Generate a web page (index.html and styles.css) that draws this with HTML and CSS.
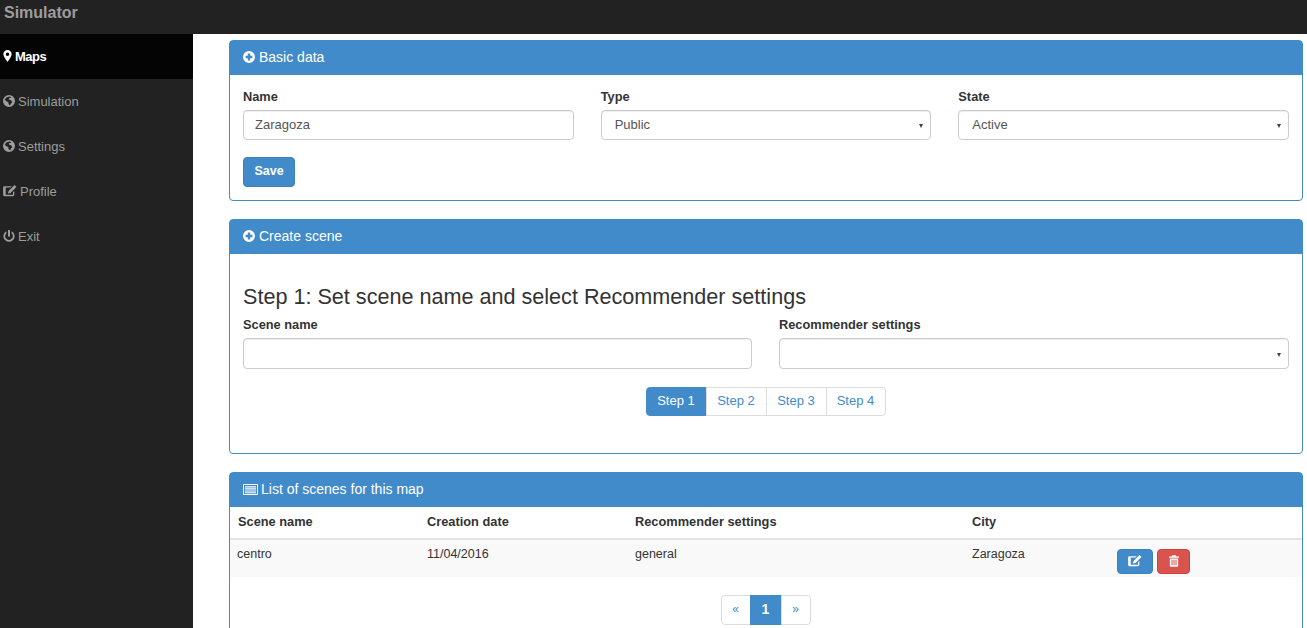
FILE: index.html
```html
<!DOCTYPE html>
<html lang="en">
<head>
  <meta charset="UTF-8" />
  <title>Simulator</title>
  <link rel="stylesheet" href="styles.css">
</head>
<body>
  <svg class="icon-defs" aria-hidden="true">
    <symbol id="i-marker" viewBox="0 0 10 14"><path fill-rule="evenodd" d="M5 0a4.800 4.800 0 0 1 4.800 4.900C9.800 7.600 7 11 5 14 3 11 .2 7.600 .2 4.900A4.800 4.800 0 0 1 5 0zm0 2.800a2.100 2.100 0 1 0 0 4.200 2.100 2.100 0 0 0 0-4.200z"/></symbol>
    <symbol id="i-globe" viewBox="0 0 12 12"><path fill-rule="evenodd" d="M6 0a6 6 0 1 1 0 12A6 6 0 0 1 6 0zM3.200 2.400 1.800 4.800 3.800 6.600 5.200 6.900 5.600 9 7 10.400 8 8.600 9.400 7.200 8 5.300 6.200 4.800 5.700 3.600 7 3 8.400 2.500 6.600 1.500z"/></symbol>
    <symbol id="i-edit" viewBox="0 0 16 14"><path d="M1.500 1.500H10L8.600 3H3v8.500h8.500V8.400L13 7v4.500a1.500 1.500 0 0 1-1.500 1.500h-10A1.500 1.500 0 0 1 0 11.500V3a1.500 1.500 0 0 1 1.500-1.500z"/><path d="M13.300 0 15.500 2.200 8.600 9.200 5.500 10 6.300 6.900z"/></symbol>
    <symbol id="i-power" viewBox="0 0 12 12"><path d="M5 0h2v6.500H5z"/><path d="M3.400 1.300v2.200a3.700 3.700 0 1 0 5.200 0V1.300a5.600 5.600 0 1 1-5.200 0z"/></symbol>
    <symbol id="i-plus" viewBox="0 0 12 12"><path fill-rule="evenodd" d="M6 0a6 6 0 1 1 0 12A6 6 0 0 1 6 0zM4.800 2.600v2.200H2.600v2.400h2.200v2.200h2.400V7.200h2.200V4.800H7.200V2.600z"/></symbol>
    <symbol id="i-list" viewBox="0 0 15 11"><path fill-rule="evenodd" d="M1 0h13a1 1 0 0 1 1 1v9a1 1 0 0 1-1 1H1a1 1 0 0 1-1-1V1a1 1 0 0 1 1-1zM1 1v9h13V1z"/><path d="M2 2.200h11v1.200H2zM2 4.300h11v1.200H2zM2 6.400h11v1.200H2zM2 8.300h11v1H2z"/></symbol>
    <symbol id="i-trash" viewBox="0 0 12 14"><path fill-rule="evenodd" d="M4 0h4l1 1.500h3V3H0V1.500h3zM1 4h10v8.500a1.500 1.500 0 0 1-1.500 1.500h-7A1.500 1.500 0 0 1 1 12.500zM3 5.500V12h1.200V5.500zM5.400 5.500V12h1.200V5.500zM7.800 5.500V12H9V5.500z"/></symbol>
  </svg>

  <header class="topbar">Simulator</header>

  <div class="layout">
    <nav class="sidebar">
      <a class="nav-item active"><svg class="icon icon-marker"><use href="#i-marker"/></svg>Maps</a>
      <a class="nav-item"><svg class="icon"><use href="#i-globe"/></svg>Simulation</a>
      <a class="nav-item"><svg class="icon"><use href="#i-globe"/></svg>Settings</a>
      <a class="nav-item"><svg class="icon icon-wide"><use href="#i-edit"/></svg>Profile</a>
      <a class="nav-item"><svg class="icon"><use href="#i-power"/></svg>Exit</a>
    </nav>

    <main class="content">
      <section class="panel">
        <h3 class="panel-heading"><svg class="icon"><use href="#i-plus"/></svg>Basic data</h3>
        <div class="panel-body basic-body">
          <div class="row-3">
            <div class="field">
              <label>Name</label>
              <input class="control" type="text" value="Zaragoza">
            </div>
            <div class="field">
              <label>Type</label>
              <div class="select-wrap"><select class="control"><option>Public</option></select></div>
            </div>
            <div class="field">
              <label>State</label>
              <div class="select-wrap"><select class="control"><option>Active</option></select></div>
            </div>
          </div>
          <button class="btn btn-save">Save</button>
        </div>
      </section>

      <section class="panel">
        <h3 class="panel-heading"><svg class="icon"><use href="#i-plus"/></svg>Create scene</h3>
        <div class="panel-body scene-body">
          <h2 class="step-title">Step 1: Set scene name and select Recommender settings</h2>
          <div class="row-2">
            <div class="field">
              <label>Scene name</label>
              <input class="control control-tall" type="text">
            </div>
            <div class="field">
              <label>Recommender settings</label>
              <div class="select-wrap"><select class="control control-tall"></select></div>
            </div>
          </div>
          <div class="steps">
            <a class="step current">Step 1</a>
            <a class="step">Step 2</a>
            <a class="step">Step 3</a>
            <a class="step">Step 4</a>
          </div>
        </div>
      </section>

      <section class="panel panel-last">
        <h3 class="panel-heading"><svg class="icon icon-list"><use href="#i-list"/></svg>List of scenes for this map</h3>
        <table class="scenes">
          <thead>
            <tr>
              <th class="col-name">Scene name</th>
              <th class="col-date">Creation date</th>
              <th class="col-rec">Recommender settings</th>
              <th class="col-city">City</th>
              <th></th>
            </tr>
          </thead>
          <tbody>
            <tr>
              <td class="cell-name">centro</td>
              <td>11/04/2016</td>
              <td>general</td>
              <td>Zaragoza</td>
              <td class="cell-actions">
                <button class="btn btn-edit"><svg class="icon-btn"><use href="#i-edit"/></svg></button>
                <button class="btn btn-delete"><svg class="icon-btn icon-trash"><use href="#i-trash"/></svg></button>
              </td>
            </tr>
          </tbody>
        </table>
        <div class="pager">
          <a class="page">«</a>
          <a class="page current">1</a>
          <a class="page">»</a>
        </div>
      </section>
    </main>
  </div>
</body>
</html>
```

FILE: styles.css
```css
* { box-sizing: border-box; }
html, body { height: 100%; overflow: hidden; }
body { margin: 0; font-family: "Liberation Sans", Arial, sans-serif; font-size: 14px; line-height: 20px; color: #333; background: #fff; }

.icon-defs { display: none; }
.icon { width: 12px; height: 12px; margin-right: 4px; fill: currentColor; vertical-align: -1px; }
.icon-wide { width: 14px; margin-right: 3px; }
.icon-list { width: 15px; height: 11px; margin-right: 3px; }
.icon-marker { width: 9px; margin-right: 3px; }

.topbar { height: 34px; padding: 3px 4px 0; background: #222; color: #9d9d9d; font-size: 16px; font-weight: bold; }

.layout { display: flex; height: 594px; }
.sidebar { width: 193px; flex: none; background: #222; }
.sidebar .icon { margin-right: 3px; }
.nav-item { display: block; height: 45px; padding: 13px 0 0 3px; color: #9d9d9d; font-size: 13px; }
.nav-item.active { background: #040404; color: #fff; font-weight: bold; letter-spacing: -0.5px; }

.content { flex: 1; height: 594px; padding: 6px 4px 0 36px; overflow: hidden; }

.panel { margin-bottom: 18px; border: 1px solid #428bca; border-radius: 4px; background: #fff; }
.panel-last { height: 300px; }
.panel-heading { height: 34px; margin: 0; padding: 6px 13px; background: #428bca; color: #fff; font-size: 14px; font-weight: normal; line-height: 20px; }
.panel-body { padding: 0 13px; }
.basic-body { height: 125px; padding-top: 11px; }
.scene-body { height: 199px; padding-top: 31px; }

.row-3 { display: grid; grid-template-columns: repeat(3, 1fr); gap: 27px; }
.row-2 { display: grid; grid-template-columns: 509px 510px; gap: 27px; }

.field label { display: block; height: 24px; font-size: 12.8px; font-weight: bold; line-height: 22px; }
.row-2 .field label { height: 23px; line-height: 20px; }

.control { display: block; width: 100%; height: 30px; padding: 0 11px 2px; border: 1px solid #ccc; border-radius: 4px; background: #fff; color: #555; font: 13px "Liberation Sans", Arial, sans-serif; box-shadow: inset 0 1px 1px rgba(0, 0, 0, .075); appearance: none; }
.control-tall { height: 31px; }
select.control { padding-left: 13px; }

.select-wrap { position: relative; }
.select-wrap::after { content: ""; position: absolute; right: 8px; top: 50%; margin-top: -1px; border-left: 2.5px solid transparent; border-right: 2.5px solid transparent; border-top: 4px solid #444; }

.btn { border: 1px solid transparent; border-radius: 4px; color: #fff; font: 13px "Liberation Sans", Arial, sans-serif; }
.btn-save { display: block; width: 52px; height: 30px; margin-top: 17px; padding: 0 0 3px; background: #428bca; border-color: #3d80ba; font-size: 12.5px; font-weight: bold; }

.step-title { margin: 0 0 6px; font-size: 21.6px; font-weight: normal; line-height: 24px; }

.steps { display: flex; justify-content: center; margin-top: 18px; padding-left: 1px; }
.step { width: 61px; height: 29px; margin-left: -1px; padding-right: 1px; border: 1px solid #ddd; color: #428bca; font-size: 13px; line-height: 25px; text-align: center; }
.step:last-child { width: 60px; border-radius: 0 4px 4px 0; }
.step.current { background: #428bca; border-color: #428bca; color: #fff; border-radius: 4px 0 0 4px; }

.scenes { width: 100%; border-collapse: collapse; table-layout: fixed; font-size: 12.5px; }
.scenes th { height: 32px; padding: 0 8px 2px; border-bottom: 2px solid #e4e4e4; font-size: 12.8px; text-align: left; }
.scenes td { height: 38px; padding: 0 8px 10px; background: #f9f9f9; }
.col-name { width: 189px; }
.col-date { width: 208px; }
.col-rec { width: 337px; }
.col-city { width: 145px; }
.scenes .cell-name { padding-left: 7px; }
.scenes .cell-actions { padding-top: 0; padding-bottom: 0; }

.btn-edit, .btn-delete { display: inline-block; height: 25px; padding: 0; vertical-align: top; margin-top: 6px; }
.btn-edit { width: 36px; background: #428bca; border-color: #3d80ba; }
.btn-delete { width: 33px; margin-left: 1px; background: #d9534f; border-color: #d43f3a; }
.icon-btn { width: 14px; height: 12px; fill: #fff; vertical-align: -1px; }
.icon-trash { width: 10px; }

.pager { display: flex; justify-content: center; margin-top: 18px; }
.page { width: 30px; height: 30px; margin-left: -1px; border: 1px solid #ddd; color: #428bca; font-size: 12px; line-height: 26px; text-align: center; }
.page:first-child { border-radius: 4px 0 0 4px; }
.page:last-child { border-radius: 0 4px 4px 0; }
.page.current { width: 32px; background: #428bca; border-color: #428bca; color: #fff; font-size: 14px; font-weight: bold; }
```
